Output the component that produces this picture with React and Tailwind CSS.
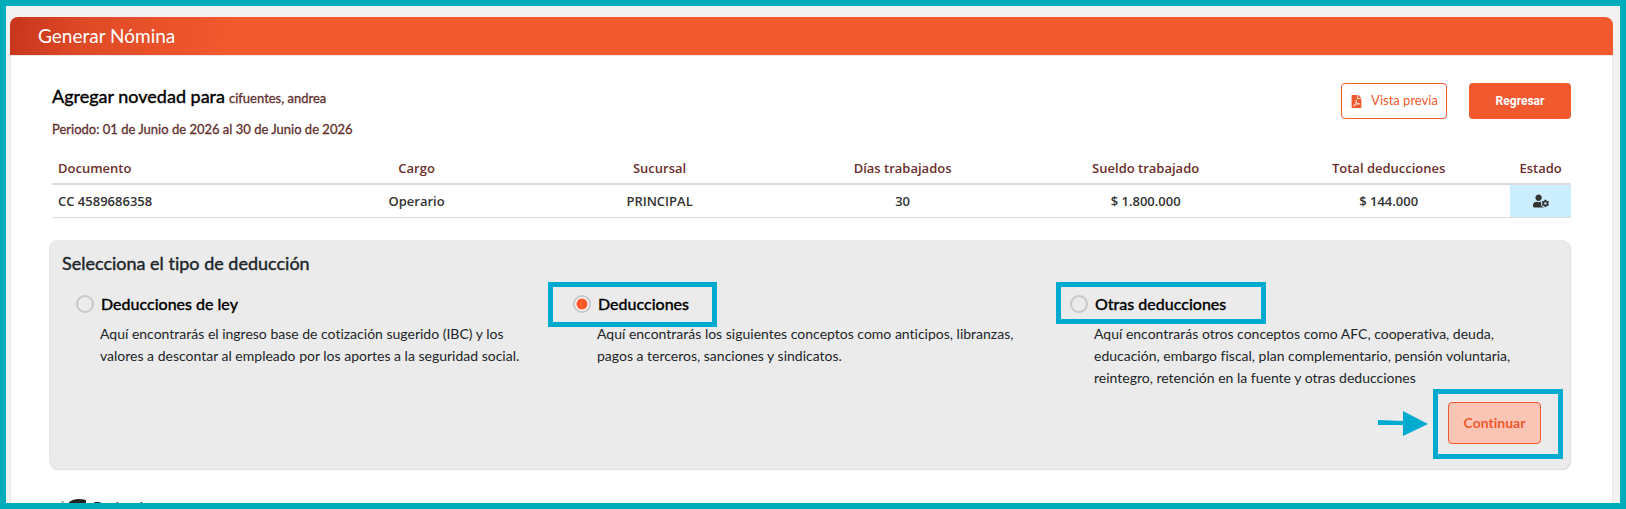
import { FaFilePdf, FaUserCog } from "react-icons/fa";

const columns = [
  { title: "Documento", value: "CC 4589686358", align: "text-left" },
  { title: "Cargo", value: "Operario", align: "text-center" },
  { title: "Sucursal", value: "PRINCIPAL", align: "text-center" },
  { title: "Días trabajados", value: "30", align: "text-center" },
  { title: "Sueldo trabajado", value: "$ 1.800.000", align: "text-center" },
  { title: "Total deducciones", value: "$ 144.000", align: "text-center" },
];

const options = [
  {
    id: "ley",
    label: "Deducciones de ley",
    text: "Aquí encontrarás el ingreso base de cotización sugerido (IBC) y los valores a descontar al empleado por los aportes a la seguridad social.",
  },
  {
    id: "deducciones",
    label: "Deducciones",
    text: "Aquí encontrarás los siguientes conceptos como anticipos, libranzas, pagos a terceros, sanciones y sindicatos.",
    mark: "-top-[12px] -bottom-[13px] -left-[25px] -right-[28px]",
  },
  {
    id: "otras",
    label: "Otras deducciones",
    text: "Aquí encontrarás otros conceptos como AFC, cooperativa, deuda, educación, embargo fiscal, plan complementario, pensión voluntaria, reintegro, retención en la fuente y otras deducciones",
    mark: "-top-[12px] -bottom-[10px] -left-[14px] -right-[40px]",
  },
];

function Option({ id, label, text, mark }) {
  return (
    <div>
      <div className="relative inline-flex items-center gap-[7px]">
        <input
          type="radio"
          name="tipo"
          id={id}
          defaultChecked={id === "deducciones"}
          aria-describedby={`${id}-texto`}
          className="size-[18px] shrink-0 appearance-none rounded-full border-2 border-[#c8c8c8] checked:bg-[radial-gradient(circle,#ff5a28_5px,#fff_6px)]"
        />
        <label htmlFor={id} className="text-base leading-5 font-medium text-black [-webkit-text-stroke:0.3px_currentColor]">
          {label}
        </label>
        {mark && <span className={`pointer-events-none absolute border-[5px] border-[#00abcf] ${mark}`} />}
      </div>
      <p id={`${id}-texto`} className="mt-1 pl-6 text-sm leading-[22px] text-[#212529]">
        {text}
      </p>
    </div>
  );
}

export default function App() {
  return (
    <div className="h-screen overflow-hidden border-[6px] border-[#00aebb] bg-[#f2f2f2] pt-[11px] pr-[7px] pl-1 font-['Lato',sans-serif] [font-variant-ligatures:none]">
      <header className="flex h-[38px] items-center rounded-t-lg bg-[linear-gradient(100deg,#c7351c_0,#e04a26_80px,#f1592e_220px)] px-7">
        <h1 className="text-[19px] leading-7 text-white">Generar Nómina</h1>
      </header>
      <main className="min-h-screen border border-[#e8e8ea] bg-white px-[38px] pt-[27px]">
        <div className="flex justify-between px-[3px]">
          <div className="text-[#5f2f2d]">
            <h2 className="flex items-baseline gap-1 leading-[26px]">
              <span className="text-lg leading-[26px] text-black [-webkit-text-stroke:0.4px_currentColor]">Agregar novedad para</span>
              <span className="text-[13px] [-webkit-text-stroke:0.3px_currentColor]">cifuentes, andrea</span>
            </h2>
            <p className="mt-2 text-[13px] leading-5 [-webkit-text-stroke:0.3px_currentColor]">
              Periodo: 01 de Junio de 2026 al 30 de Junio de 2026
            </p>
          </div>
          <div className="flex gap-[22px]">
            <button type="button" className="flex h-9 w-[106px] items-center justify-center gap-2 rounded border border-[#f1592e] bg-white text-[13px] text-[#f1592e]">
              <FaFilePdf className="size-[13px]" />
              Vista previa
            </button>
            <button type="button" className="h-9 w-[102px] rounded bg-[#f1592e] font-['Roboto',sans-serif] text-xs font-bold text-white">
              Regresar
            </button>
          </div>
        </div>

        <div className="mt-[13px] px-[3px]">
          <table className="w-full table-fixed border-collapse font-['Open_Sans',sans-serif] text-[13px] leading-5 font-semibold">
            <thead>
              <tr className="h-[32px] border-b-2 border-[#dcdcdc] text-[#6b2f2d]">
                {columns.map((c) => (
                  <th key={c.title} scope="col" className={`w-[16%] px-1.5 font-semibold ${c.align}`}>
                    {c.title}
                  </th>
                ))}
                <th scope="col" className="font-semibold">Estado</th>
              </tr>
            </thead>
            <tbody>
              <tr className="h-[33px] border-b border-[#dcdcdc] text-[#333]">
                {columns.map((c) => (
                  <td key={c.title} className={`px-1.5 ${c.align}`}>
                    {c.value}
                  </td>
                ))}
                <td className="bg-[#ccefff]">
                  <FaUserCog className="mx-auto size-4" />
                </td>
              </tr>
            </tbody>
          </table>
        </div>

        <section className="mt-[22px] mr-1 rounded-lg border border-[#e8e8e8] bg-[#ebebeb] px-3 pt-2 pb-6 shadow-[1px_1px_1px_#dedede]">
          <h2 className="text-lg leading-7 text-[#212529] [-webkit-text-stroke:0.4px_currentColor]">Selecciona el tipo de deducción</h2>
          <div className="mt-[17px] grid grid-cols-3 gap-x-[30px] pr-5 pl-[14px]">
            {options.map((o) => (
              <Option key={o.id} {...o} />
            ))}
          </div>
          <div className="mt-[13px] mr-4 flex items-center justify-end gap-5">
            <svg viewBox="0 0 50 26" className="h-[26px] w-[50px]" fill="#00abcf" aria-hidden="true">
              <path d="M0 10 L25 11 V1 L50 14 L25 26 V15 L0 15 Z" />
            </svg>
            <div className="relative">
              <button type="button" className="h-[42px] w-[93px] rounded border border-[#f1592e] bg-[#fbc5b5] text-sm font-bold text-[#f1592e]">
                Continuar
              </button>
              <span className="pointer-events-none absolute -top-[13px] -right-[22px] -bottom-[15px] -left-[15px] border-[5px] border-[#00abcf]" />
            </div>
          </div>
        </section>
        <div className="mt-7 flex items-start gap-1.5 pl-3 text-sm leading-5 text-[#212529]">
          <svg viewBox="0 0 26 20" className="h-5 w-[26px]" aria-hidden="true">
            <path d="M0 4h3v12H0z" fill="#bbb" />
            <path d="M8 5q4-3 9-3t8 1v6l-8 7H8z" fill="#222" />
          </svg>
          <span>Deducciones</span>
        </div>
      </main>
    </div>
  );
}
